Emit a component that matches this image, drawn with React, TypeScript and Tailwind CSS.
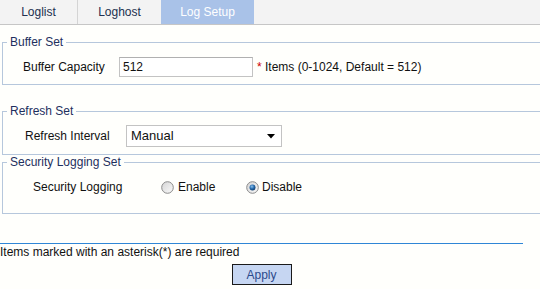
import React from "react";

function Radio({ checked }: { checked: boolean }) {
  return (
    <svg width="13" height="13" viewBox="0 0 13 13" className="shrink-0">
      <defs>
        <linearGradient id={checked ? "rgc" : "rgu"} x1="0" y1="0" x2="1" y2="1">
          <stop offset="0" stopColor="#d4d4d4" />
          <stop offset="1" stopColor="#fbfbfb" />
        </linearGradient>
        <radialGradient id="dot" cx="0.4" cy="0.35" r="0.7">
          <stop offset="0" stopColor="#8fc4ee" />
          <stop offset="0.5" stopColor="#2a6eb0" />
          <stop offset="1" stopColor="#0e3866" />
        </radialGradient>
      </defs>
      <circle cx="6.5" cy="6.5" r="5.8" fill={`url(#${checked ? "rgc" : "rgu"})`} stroke="#8a8a8a" strokeWidth="1" />
      {checked && <circle cx="6.5" cy="6.5" r="3" fill="url(#dot)" />}
    </svg>
  );
}

export default function App() {
  return (
    <div className="w-[540px] h-[289px] overflow-hidden bg-[#fffffc] font-['Liberation_Sans',Arial,sans-serif] text-[12px] leading-[14px] text-[#111]">
      {/* Tabs */}
      <div className="flex h-[25px] bg-[#f3f3f3] border-b border-[#c6c6c6]">
        <div className="w-[78px] flex items-center justify-center border-r border-[#d4d4d4] text-[#22304f]">Loglist</div>
        <div className="w-[83px] flex items-center justify-center text-[#22304f]">Loghost</div>
        <div className="w-[93px] flex items-center justify-center bg-[#a9c2e8] text-white">Log Setup</div>
      </div>

      {/* Buffer Set */}
      <fieldset className="mt-[10px] ml-[2px] w-[560px] border border-[#b6c7dc]">
        <legend className="ml-[4px] px-[3px] text-[#1e2f5e] leading-[14px]">Buffer Set</legend>
        <div className="flex items-center pl-[20px] pt-[8px] pb-[7px]">
          <div className="w-[96px]">Buffer Capacity</div>
          <div className="w-[134px] h-[20px] border border-[#c3c3c3] border-t-[#b0b0b0] bg-white flex items-center pl-[3px]">512</div>
          <div className="ml-[4px]">
            <span className="text-[#cc0000]">*</span> Items (0-1024, Default = 512)
          </div>
        </div>
      </fieldset>

      {/* Refresh Set */}
      <fieldset className="mt-[19px] ml-[2px] w-[560px] border border-[#b6c7dc]">
        <legend className="ml-[4px] px-[3px] text-[#1e2f5e] leading-[14px]">Refresh Set</legend>
        <div className="flex items-center pl-[22px] pt-[7px] pb-[7px]">
          <div className="w-[101px]">Refresh Interval</div>
          <div className="w-[156px] h-[22px] border border-[#c3c3c3] bg-white flex items-center justify-between pl-[4px] pr-[6px] text-[13px]">
            <span>Manual</span>
            <svg width="8" height="5" viewBox="0 0 8 5">
              <path d="M0 0 H8 L4 4.5 Z" fill="#000" />
            </svg>
          </div>
        </div>
      </fieldset>

      {/* Security Logging Set */}
      <fieldset className="ml-[2px] w-[560px] border border-[#b6c7dc]">
        <legend className="ml-[4px] px-[3px] text-[#1e2f5e] leading-[14px]">Security Logging Set</legend>
        <div className="flex items-center pl-[30px] pt-[10px] pb-[18px] h-[44px] box-border">
          <div className="w-[128px]">Security Logging</div>
          <div className="w-[85px] flex items-center gap-[4px]">
            <Radio checked={false} />
            <span>Enable</span>
          </div>
          <div className="flex items-center gap-[3px]">
            <Radio checked={true} />
            <span>Disable</span>
          </div>
        </div>
      </fieldset>

      {/* Footer */}
      <div className="mt-[29px] w-[523px] border-t border-[#2f86d6]" />
      <div className="mt-[1px]">Items marked with an asterisk(*) are required</div>
      <div className="w-[523px] flex justify-center mt-[5px]">
        <button className="w-[60px] h-[21px] bg-[#c6d6f2] border border-[#1a1a1a] text-[#2b4a8c] text-[12px] font-['Liberation_Sans',Arial,sans-serif]">
          Apply
        </button>
      </div>
    </div>
  );
}
